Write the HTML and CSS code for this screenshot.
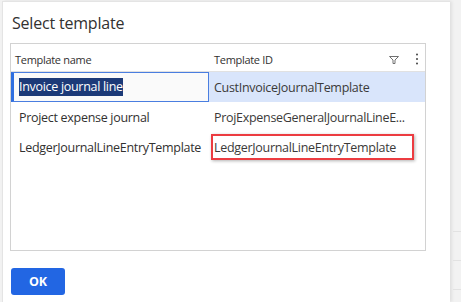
FILE: index.html
```html
<!DOCTYPE html>
<html>
<head>
<meta charset="utf-8">
<link rel="stylesheet" href="styles.css">
</head>
<body>
<div class="page">
  <div class="dialog">
    <h1 class="title">Select template</h1>
    <div class="grid">
      <div class="row head">
        <div class="cell c1">Template name</div>
        <div class="cell c2">Template ID
          <span class="tools">
            <svg class="filter" width="10" height="8" viewBox="0 0 10 8"><path d="M0.5 0.5 H9.5 L6 4 V7.5 H4 V4 Z" fill="none" stroke="#707070" stroke-width="1"/></svg>
            <svg class="kebab" width="4" height="12" viewBox="0 0 4 12"><circle cx="2" cy="1.5" r="1" fill="#444"/><circle cx="2" cy="6" r="1" fill="#444"/><circle cx="2" cy="10.5" r="1" fill="#444"/></svg>
          </span>
        </div>
      </div>
      <div class="row sel">
        <div class="cell c1 input"><span class="hl">Invoice journal line</span></div>
        <div class="cell c2">CustInvoiceJournalTemplate</div>
      </div>
      <div class="row">
        <div class="cell c1">Project expense journal</div>
        <div class="cell c2">ProjExpenseGeneralJournalLineE...</div>
      </div>
      <div class="row">
        <div class="cell c1">LedgerJournalLineEntryTemplate</div>
        <div class="cell c2 marked">LedgerJournalLineEntryTemplate</div>
      </div>
    </div>
    <div class="footer">
      <button class="ok">OK</button>
    </div>
  </div>
  <div class="side">
    <div class="sl"></div>
    <div class="sl"></div>
    <div class="sl"></div>
  </div>
</div>
</body>
</html>
```
FILE: styles.css
```css
html, body {
  margin: 0;
  padding: 0;
  background: #f2f2f2;
  font-family: "Open Sans", "Noto Sans", sans-serif;
  color: #323130;
  overflow: hidden;
}
.page {
  display: flex;
  height: 302px;
  padding-top: 1px;
  box-sizing: border-box;
}
.dialog {
  margin-left: 2px;
  width: 448px;
  background: #fff;
  border-left: 1px solid #e4e4e4;
  border-top: 1px solid #e4e4e4;
  box-sizing: border-box;
  padding: 0 0 0 7px;
  box-shadow: 2px 0 3px rgba(0,0,0,0.08);
}
.title {
  margin: 0;
  font-weight: 400;
  font-size: 16px;
  letter-spacing: -0.2px;
  line-height: 20px;
  padding: 11px 0 0 2px;
  height: 41px;
  box-sizing: border-box;
  color: #323130;
}
.grid {
  width: 416px;
  height: 208px;
  border: 1px solid #d2d2d2;
  box-sizing: border-box;
}
.row {
  display: flex;
  height: 30px;
  align-items: stretch;
}
.row.head {
  height: 28px;
  box-sizing: border-box;
  border-bottom: 1px solid #e1e1e1;
}
.cell {
  display: flex;
  align-items: center;
  font-size: 12.5px;
  letter-spacing: -0.3px;
  white-space: nowrap;
}
.c1 {
  width: 198px;
  padding-left: 8px;
  box-sizing: border-box;
}
.c2 {
  flex: 1;
  padding-left: 5px;
  position: relative;
  color: #3b3a39;
}
.head .cell {
  font-size: 11px;
  letter-spacing: -0.3px;
  padding-top: 3px;
  color: #323130;
}
.head .c1 { padding-left: 4px; }
.tools {
  margin-left: auto;
  display: flex;
  align-items: center;
  gap: 16px;
  padding-right: 6px;
}
.filter { margin-top: 1px; }
.row.sel .c2 { background: #d9e5fb; }
.input {
  border: 1px solid #4a7ee0;
  border-left: 3px solid #2f6fe0;
  background: #fafafa;
  padding-left: 5px;
}
.hl {
  background: #1c3a78;
  color: #fff;
  line-height: 18px;
}
.marked::after {
  content: "";
  position: absolute;
  left: 2px;
  top: 2px;
  width: 203px;
  height: 26px;
  box-sizing: border-box;
  border: 2px solid #ec3c41;
  box-shadow: 1px 1px 3px rgba(0,0,0,0.3);
}
.footer {
  padding: 17px 0 0 1px;
}
.ok {
  width: 54px;
  height: 27px;
  border: none;
  border-radius: 3px;
  background: #2266e3;
  color: #fff;
  font-family: "Open Sans", sans-serif;
  font-weight: 700;
  font-size: 12.5px;
  padding: 0;
}
.side {
  flex: 1;
  margin-left: 3px;
  padding-top: 230px;
  display: flex;
  flex-direction: column;
  gap: 28px;
}
.sl {
  height: 1px;
  background: #e2e2e2;
}
```
